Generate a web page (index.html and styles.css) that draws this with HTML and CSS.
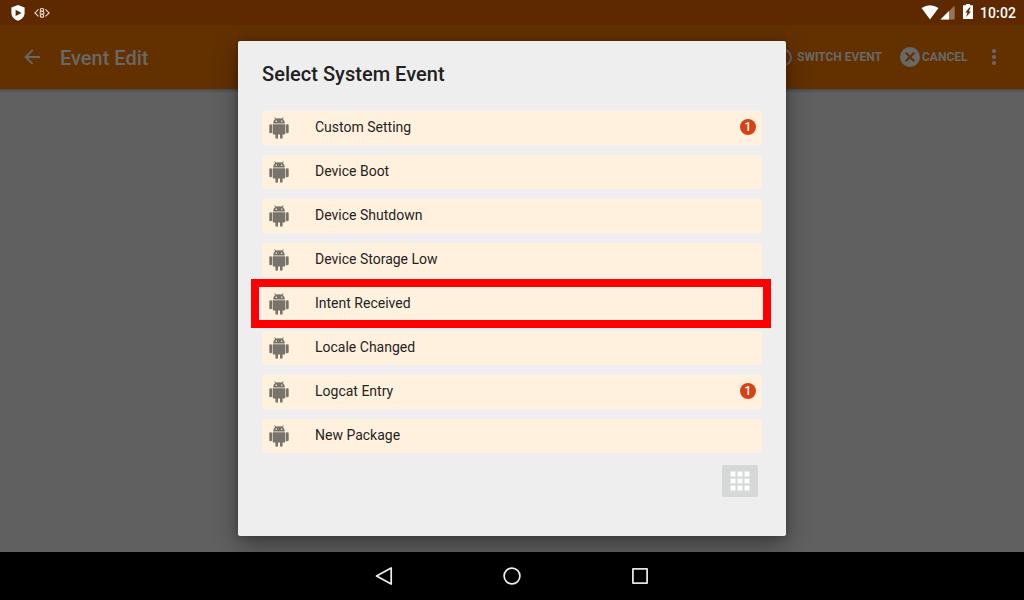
FILE: index.html
```html
<!DOCTYPE html>
<html lang="en">
<head>
<meta charset="utf-8">
<title>Event Edit</title>
<link rel="stylesheet" href="styles.css">
</head>
<body>
<svg class="defs" width="0" height="0">
  <symbol id="robot" viewBox="0 0 20 22">
    <path d="M4.200 6.500C4.200 4.300 5.100 2.900 6.400 2.100L5.200.7l.6-.4L7.400 1.600Q10 .9 12.600 1.600L14.200.3l.6.4L13.600 2.100c1.300.8 2.200 2.200 2.200 4.400ZM7.300 3.500a.7.7 0 1 0 .01 0ZM12.700 3.500a.7.7 0 1 0 .01 0Z" fill-rule="evenodd"/>
    <path d="M3.700 7.200h12.600v9.300q0 1-1 1H13.600v3a1.300 1.300 0 0 1-2.600 0v-3H9v3a1.300 1.300 0 0 1-2.600 0v-3H4.700q-1 0-1-1Z"/>
    <rect x=".3" y="7.200" width="2.800" height="9" rx="1.300"/>
    <rect x="16.900" y="7.200" width="2.800" height="9" rx="1.300"/>
  </symbol>
</svg>
<div class="screen">
  <header class="status">
    <svg width="60" height="25" viewBox="0 0 60 25">
      <path d="M18 5l6.600 2.500v5.200c0 4-2.700 6.700-6.600 8.100-3.900-1.400-6.600-4.100-6.600-8.100V7.500Z" fill="#fff"/>
      <path d="M15.600 9.800v6.200l6-3.100Z" fill="#5f2900"/>
      <g fill="none" stroke="#e4d6c6" stroke-width="1.200">
        <path d="M38.500 9.400l-3.600 3.500 3.600 3.500M45.500 9.400l3.600 3.500-3.600 3.500"/>
        <rect x="40.400" y="8.500" width="3.200" height="2.700" rx="1"/><rect x="40.100" y="11.500" width="3.800" height="2.700" rx="1"/><rect x="40.400" y="14.500" width="3.200" height="2.700" rx="1"/>
      </g>
    </svg>
    <svg class="status-right" width="60" height="25" viewBox="0 0 60 25">
      <path d="M1.500 8.100Q10 2.200 18.500 8.100L10 19.500Z" fill="#fff"/>
      <path d="M34.700 5.500v14H20.500Z" fill="#987456"/>
      <path d="M29 11v8.500h-8.500Z" fill="#fff"/>
      <path d="M43 5.300h3V4h4v1.300h3V19H43Z" fill="#fff"/>
      <path d="M49.500 7.500l-4.200 5h2.200l-1.500 4.600 5-5.600h-2.300l2-4Z" fill="#5f2900"/>
    </svg>
    <span class="clock">10:02</span>
  </header>
  <div class="appbar">
    <svg class="back" width="18" height="18" viewBox="0 0 18 18" fill="none" stroke="#686868" stroke-width="1.900"><path d="M17 9H3M9.700 1.900L2.600 9l7.100 7.100"/></svg>
    <h1 class="page-title">Event Edit</h1>
    <svg class="switch-icon" width="20" height="20" viewBox="0 0 20 20"><circle cx="10" cy="10.500" r="8" fill="none" stroke="#686868" stroke-width="1.900"/></svg>
    <span class="action switch-label">SWITCH EVENT</span>
    <svg class="cancel-icon" width="20" height="20" viewBox="0 0 20 20"><circle cx="10" cy="10" r="10" fill="#686868"/><path d="M5.800 5.800l8.400 8.400M14.200 5.800l-8.400 8.400" stroke="#633100" stroke-width="2.300"/></svg>
    <span class="action cancel-label">CANCEL</span>
    <svg class="more" width="6" height="18" viewBox="0 0 6 18" fill="#686868"><circle cx="3" cy="3" r="2.100"/><circle cx="3" cy="9" r="2.100"/><circle cx="3" cy="15" r="2.100"/></svg>
  </div>
  <main class="content"></main>
  <section class="dialog">
    <h2 class="dialog-title">Select System Event</h2>
    <ul class="events">
      <li class="event"><svg class="robot"><use href="#robot"/></svg><span>Custom Setting</span><b class="badge">1</b></li>
      <li class="event"><svg class="robot"><use href="#robot"/></svg><span>Device Boot</span></li>
      <li class="event"><svg class="robot"><use href="#robot"/></svg><span>Device Shutdown</span></li>
      <li class="event"><svg class="robot"><use href="#robot"/></svg><span>Device Storage Low</span></li>
      <li class="event"><svg class="robot"><use href="#robot"/></svg><span>Intent Received</span></li>
      <li class="event"><svg class="robot"><use href="#robot"/></svg><span>Locale Changed</span></li>
      <li class="event"><svg class="robot"><use href="#robot"/></svg><span>Logcat Entry</span><b class="badge">1</b></li>
      <li class="event"><svg class="robot"><use href="#robot"/></svg><span>New Package</span></li>
    </ul>
    <div class="grid-button"><i></i><i></i><i></i><i></i><i></i><i></i><i></i><i></i><i></i></div>
  </section>
  <div class="highlight"></div>
  <nav class="navbar">
    <svg width="20" height="20" viewBox="0 0 20 20" fill="none" stroke="#eee" stroke-width="1.700" stroke-linejoin="round"><path d="M17.200 1.900v16.200L2.500 10Z"/></svg>
    <svg width="20" height="20" viewBox="0 0 20 20" fill="none" stroke="#eee" stroke-width="1.700"><circle cx="10" cy="10" r="7.900"/></svg>
    <svg width="20" height="20" viewBox="0 0 20 20" fill="none" stroke="#e2e2e2" stroke-width="1.800" stroke-linejoin="round"><rect x="2.900" y="2.900" width="14.200" height="14.200"/></svg>
  </nav>
</div>
</body>
</html>
```
FILE: styles.css
```css
* { box-sizing: border-box; }
body { margin: 0; font-family: Roboto, sans-serif; }
.defs { position: absolute; }
.screen {
  position: relative;
  width: 1024px;
  height: 600px;
  overflow: hidden;
  display: flex;
  flex-direction: column;
}
.status {
  height: 25px;
  display: flex;
  background: #5f2900;
}
.status-right { margin-left: auto; }
.clock {
  width: 44px;
  line-height: 26px;
  font-size: 14px;
  font-weight: 500;
  letter-spacing: .1px;
  color: #fff;
}
.appbar {
  height: 64px;
  padding-left: 23px;
  display: flex;
  align-items: center;
  background: #633100;
  color: #686868;
}
.back { flex: none; }
.page-title {
  margin: 2px 0 0 19px;
  font-size: 20px;
  font-weight: 500;
  line-height: 24px;
}
.switch-icon { margin-left: auto; }
.action {
  font-size: 12px;
  font-weight: 700;
  line-height: 16px;
  white-space: nowrap;
}
.switch-label { width: 86px; margin-left: 4px; }
.cancel-icon { margin-left: 17px; }
.cancel-label { width: 46px; margin-left: 2px; }
.more { margin: 0 27px 0 23px; }
.content {
  flex: 1;
  background: linear-gradient(#4b4b4b, #606060 4px);
}
.dialog {
  position: absolute;
  left: 238px;
  top: 41px;
  width: 548px;
  height: 495px;
  padding: 21px 24px 0;
  border-radius: 2px;
  background: #eee;
  box-shadow: 0 9px 24px rgba(0, 0, 0, .38), 0 0 6px rgba(0, 0, 0, .2);
  display: flex;
  flex-direction: column;
}
.dialog-title {
  margin: 0 0 25px;
  font-size: 20px;
  font-weight: 500;
  line-height: 24px;
  letter-spacing: .03px;
  color: #212121;
}
.events {
  margin: 0;
  padding: 0;
  list-style: none;
  display: flex;
  flex-direction: column;
  gap: 10px;
}
.event {
  height: 34px;
  padding: 0 6px 2px 7px;
  display: flex;
  align-items: center;
  border-radius: 2px;
  background: #fff1de;
  font-size: 14px;
  line-height: 16px;
  color: #26231f;
}
.robot {
  width: 20px;
  height: 22px;
  margin: 2px 26px 0 0;
  fill: #77736b;
}
.badge {
  width: 16px;
  height: 16px;
  margin-left: auto;
  border-radius: 50%;
  background: #d84315;
  color: #fff;
  font-size: 12px;
  font-weight: 500;
  line-height: 17px;
  text-align: center;
}
.grid-button {
  align-self: flex-end;
  width: 36px;
  height: 32px;
  margin: 12px 4px 0 0;
  padding: 7px 0 0 9px;
  display: grid;
  grid-template-columns: repeat(3, 4px);
  grid-auto-rows: 4px;
  gap: 3px;
  border-radius: 2px;
  background: #d6d8d7;
}
.grid-button i {
  background: #fff;
  box-shadow: 0 0 0 1px rgba(255, 255, 255, .4);
}
.highlight {
  position: absolute;
  left: 251px;
  top: 279px;
  width: 520px;
  height: 49px;
  border: 8px solid #f00;
}
.navbar {
  position: relative;
  height: 48px;
  display: flex;
  align-items: center;
  justify-content: center;
  gap: 108px;
  background: #000;
}
```
